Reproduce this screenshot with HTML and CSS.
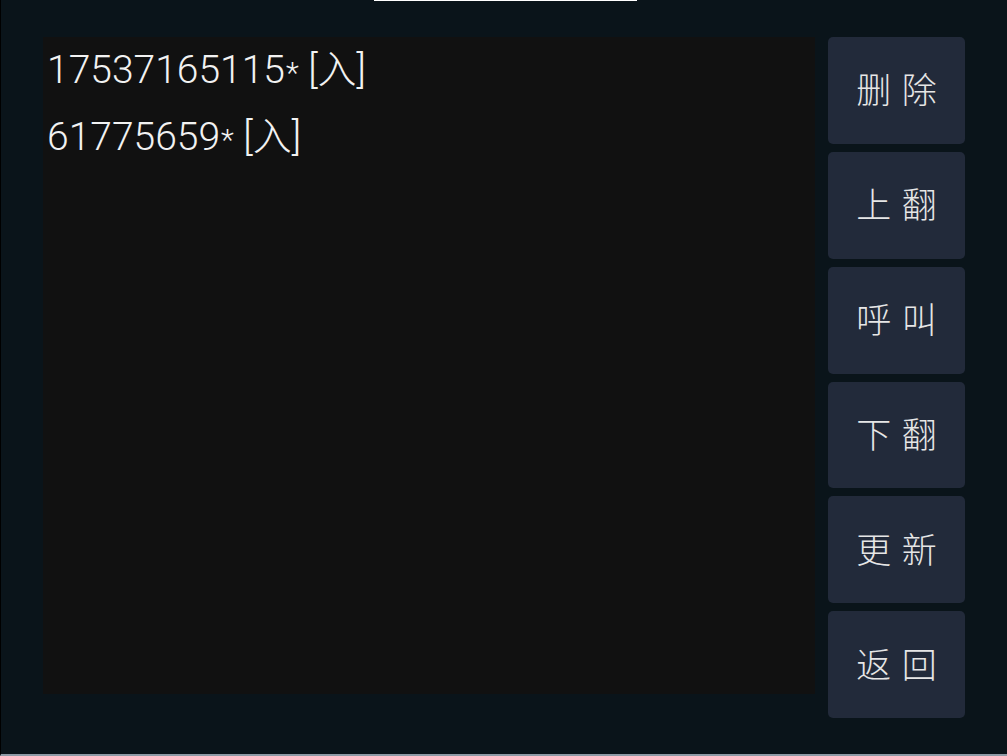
FILE: index.html
```html
<!DOCTYPE html>
<html lang="zh">
<head>
<meta charset="utf-8">
<title>呼叫记录</title>
<link rel="stylesheet" href="styles.css">
</head>
<body>
<div class="screen">
  <div class="topmark"></div>
  <div class="main">
    <div class="list">
      <div class="row">17537165115<span class="star">*</span> [入]</div>
      <div class="row">61775659<span class="star">*</span> [入]</div>
    </div>
    <div class="buttons">
      <div class="btn">删 除</div>
      <div class="btn">上 翻</div>
      <div class="btn">呼 叫</div>
      <div class="btn">下 翻</div>
      <div class="btn">更 新</div>
      <div class="btn">返 回</div>
    </div>
  </div>
</div>
</body>
</html>
```
FILE: styles.css
```css
html, body {
  margin: 0;
  padding: 0;
  background: #0a141a;
}
.screen {
  width: 1007px;
  height: 756px;
  box-sizing: border-box;
  border-left: 1px solid #000;
  border-bottom: 2px solid #8e9aa6;
  background: #0a141a;
  display: flex;
  flex-direction: column;
}
.topmark {
  margin-left: 373px;
  width: 263px;
  height: 1px;
  background: #ffffff;
}
.main {
  display: flex;
  padding-top: 36px;
  padding-left: 42px;
  gap: 13px;
}
.list {
  width: 772px;
  height: 657px;
  background: #111111;
  box-sizing: border-box;
  padding: 1px 0 0 4px;
  font-family: Roboto, "Noto Sans CJK SC", sans-serif;
  font-weight: 300;
  font-size: 39px;
  line-height: 65px;
  color: #f2f2f2;
}
.row {
  white-space: pre;
}
.star {
  font-size: 30px;
  margin-left: 1px;
}
.buttons {
  width: 137px;
  height: 681px;
  display: grid;
  grid-template-rows: repeat(6, 1fr);
  gap: 8px;
}
.btn {
  background: #222a3a;
  border-radius: 5px;
  display: flex;
  align-items: center;
  justify-content: center;
  padding-bottom: 5px;
  box-sizing: border-box;
  font-family: "Noto Sans CJK SC", sans-serif;
  font-weight: 300;
  font-size: 35px;
  word-spacing: 3px;
  color: #e6e6e6;
  white-space: pre;
}
```
